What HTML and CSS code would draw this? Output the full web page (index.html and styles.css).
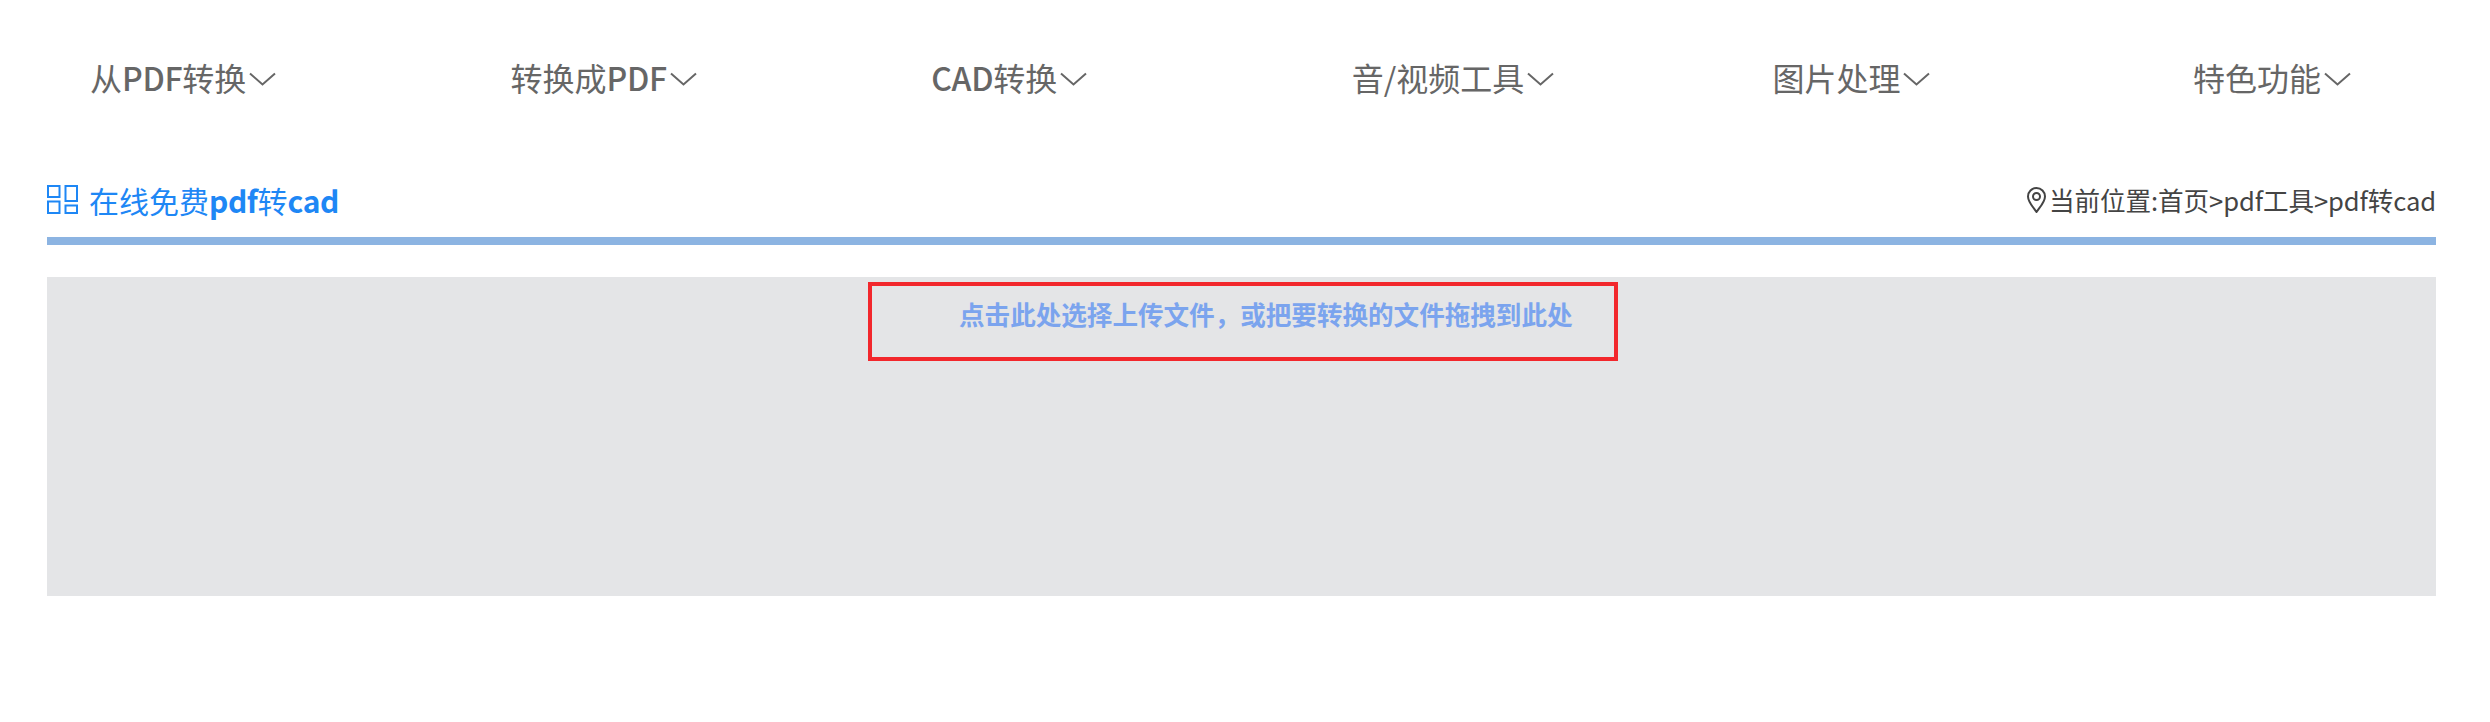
FILE: index.html
```html
<!DOCTYPE html>
<html lang="zh-CN">
<head>
<meta charset="utf-8">
<title>在线免费pdf转cad</title>
<link rel="stylesheet" href="styles.css">
</head>
<body>
<nav class="nav">
  <a class="nav-item"><span>从<b>PDF</b>转换</span><svg class="chev" viewBox="0 0 27 14"><path d="M1 1.5 13.5 12.5 26 1.5"/></svg></a>
  <a class="nav-item"><span>转换成<b>PDF</b></span><svg class="chev" viewBox="0 0 27 14"><path d="M1 1.5 13.5 12.5 26 1.5"/></svg></a>
  <a class="nav-item"><span><b>CAD</b>转换</span><svg class="chev" viewBox="0 0 27 14"><path d="M1 1.5 13.5 12.5 26 1.5"/></svg></a>
  <a class="nav-item"><span>音/视频工具</span><svg class="chev" viewBox="0 0 27 14"><path d="M1 1.5 13.5 12.5 26 1.5"/></svg></a>
  <a class="nav-item"><span>图片处理</span><svg class="chev" viewBox="0 0 27 14"><path d="M1 1.5 13.5 12.5 26 1.5"/></svg></a>
  <a class="nav-item"><span>特色功能</span><svg class="chev" viewBox="0 0 27 14"><path d="M1 1.5 13.5 12.5 26 1.5"/></svg></a>
</nav>
<main class="content">
  <header class="title-row">
    <h1 class="title">
      <svg class="grid-icon" viewBox="0 0 31 29"><rect x="1" y="1" width="11.500" height="11"/><rect x="1" y="16.500" width="11.500" height="11.500"/><rect x="18.500" y="1" width="11.500" height="15"/><rect x="18.500" y="20.500" width="11.500" height="7.500"/></svg>
      <span>在线免费<b>pdf</b>转<b>cad</b></span>
    </h1>
    <div class="crumbs">
      <svg class="pin" viewBox="0 0 19 26"><path d="M9.500 25C6 20 1 15 1 9.500a8.500 8.500 0 0 1 17 0C18 15 13 20 9.500 25Z"/><circle cx="9.500" cy="9.500" r="3.500"/></svg>
      <span>当前位置:首页&gt;pdf工具&gt;pdf转cad</span>
    </div>
  </header>
  <section class="upload">
    <div class="drop-target">点击此处选择上传文件，或把要转换的文件拖拽到此处</div>
  </section>
</main>
</body>
</html>
```
FILE: styles.css
```css
* { box-sizing: border-box; }
html, body { margin: 0; background: #fff; }
body {
  height: 722px;
  overflow: hidden;
  font-family: "Noto Sans CJK SC", "Noto Sans", sans-serif;
}
b { font-weight: 500; letter-spacing: -0.3px; }
.nav {
  display: grid;
  grid-template-columns: repeat(5, 420.6px) 1fr;
  height: 154px;
  padding-left: 90px;
  align-items: center;
}
.nav-item {
  display: flex;
  align-items: center;
  gap: 3px;
  font-size: 32px;
  line-height: 44px;
  color: #666;
}
.chev { width: 27px; height: 14px; margin-top: 3px; }
.chev path { fill: none; stroke: #666; stroke-width: 2; }
.content { padding: 0 54px 0 47px; }
.title-row {
  display: flex;
  justify-content: space-between;
  align-items: center;
  height: 91px;
  padding-top: 8px;
  border-bottom: 8px solid #8cb4e2;
}
.title {
  display: flex;
  align-items: center;
  gap: 11px;
  margin: 0;
  font-size: 30px;
  line-height: 40px;
  font-weight: 400;
  color: #1e87f5;
}
.title b { font-weight: 700; letter-spacing: -0.4px; }
.grid-icon { width: 31px; height: 29px; }
.grid-icon rect { fill: none; stroke: #1e87f5; stroke-width: 2; }
.crumbs {
  display: flex;
  align-items: center;
  gap: 3px;
  font-size: 25.6px;
  line-height: 36px;
  letter-spacing: -0.1px;
  color: #444;
}
.pin { width: 19px; height: 26px; }
.pin path, .pin circle { fill: none; stroke: #444; stroke-width: 2; }
.upload {
  height: 319px;
  margin-top: 32px;
  padding: 5px 0 0 821px;
  background: #e4e5e7;
}
.drop-target {
  width: 750px;
  height: 79px;
  padding: 11px 0 0 87px;
  border: 4px solid #f2272c;
  font-size: 25.6px;
  line-height: 34px;
  font-weight: 700;
  letter-spacing: -0.03px;
  color: #7ba4ee;
  white-space: nowrap;
}
```
